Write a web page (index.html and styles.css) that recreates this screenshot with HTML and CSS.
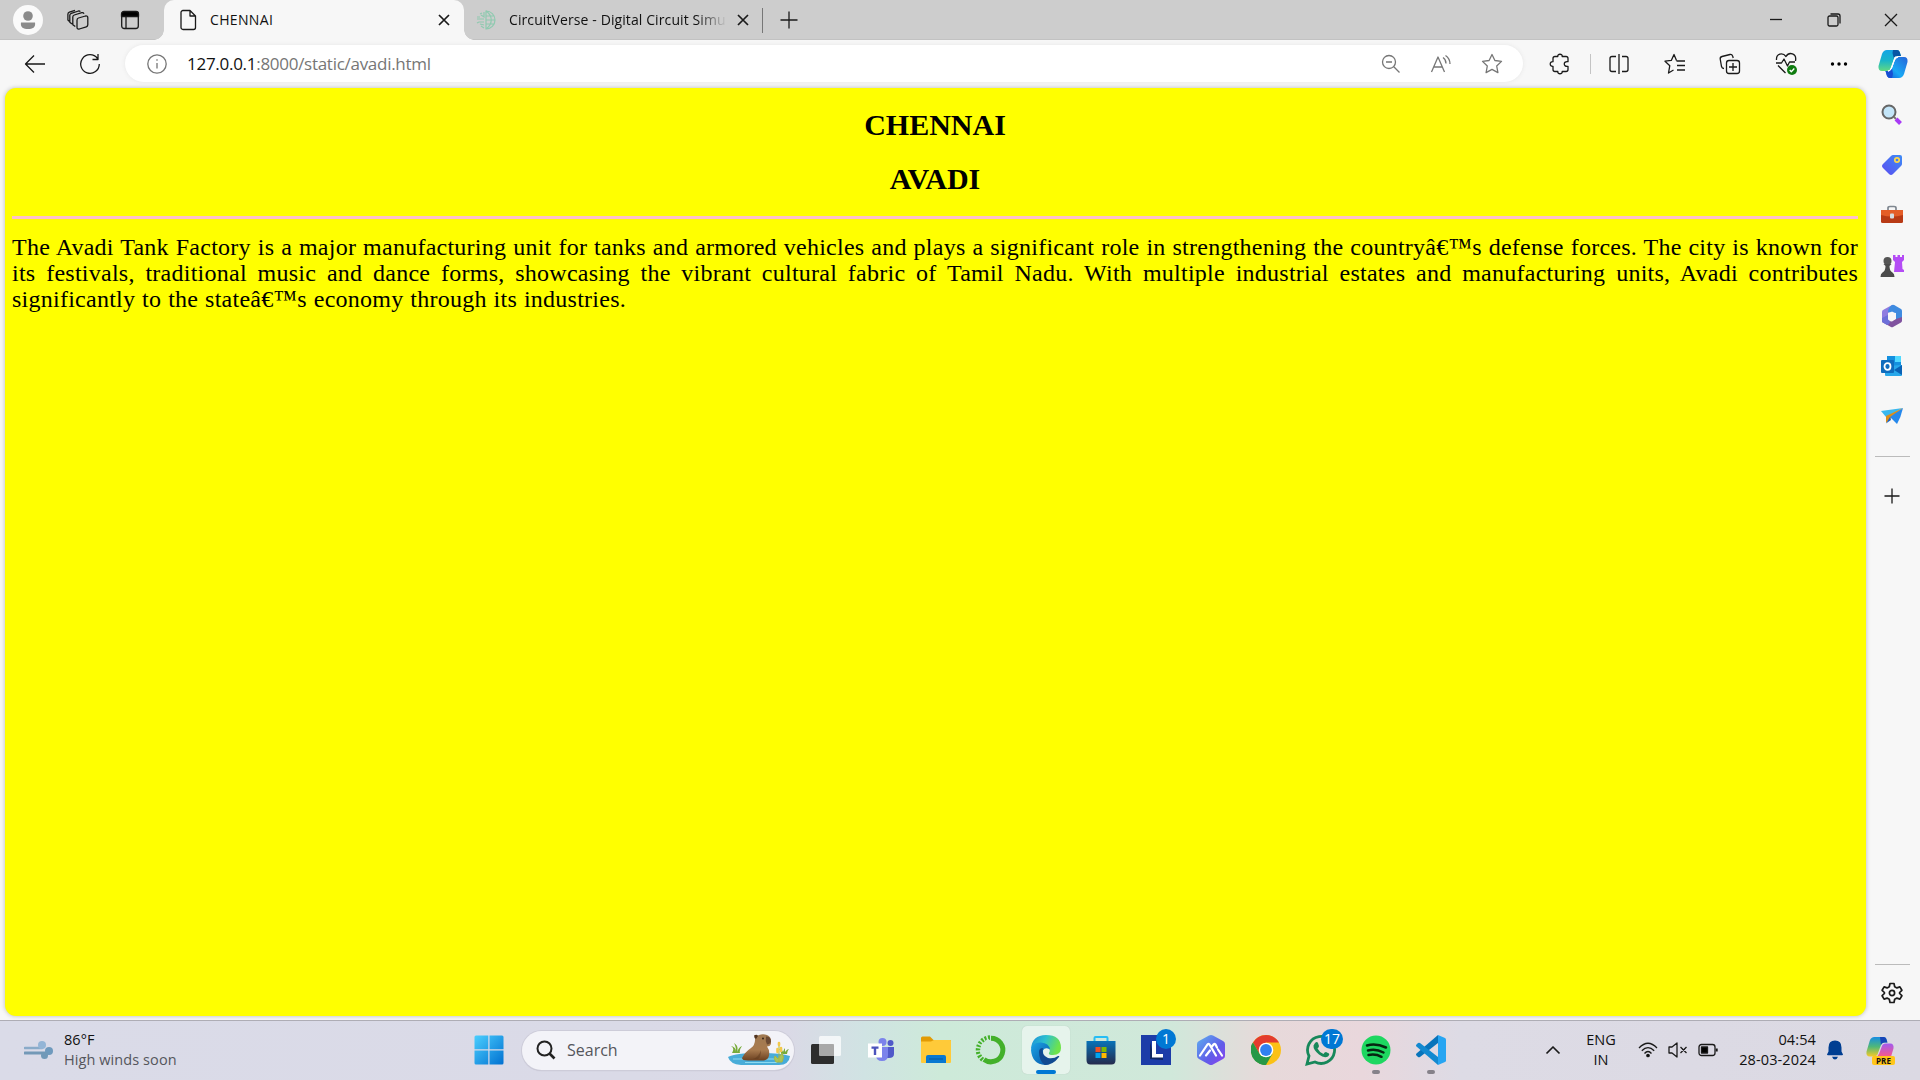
FILE: index.html
```html
<!DOCTYPE html>
<html lang="en">
<head>
<meta charset="utf-8">
<title>CHENNAI</title>
<link rel="stylesheet" href="styles.css">
</head>
<body>
<div class="screen">
  <header class="titlebar">
    <div class="slot s-profile"><svg width="30" height="30" viewBox="0 0 30 30"><circle cx="15" cy="15" r="15" fill="#fafafa"/><circle cx="15" cy="11" r="4.800" fill="#8b8b8b"/><path d="M8 17.500h14c.8 5-2.500 6.500-7 6.500s-7.800-1.500-7-6.500z" fill="#8b8b8b"/></svg></div>
    <div class="slot s-spaces"><svg class="line" width="22" height="22" viewBox="0 0 22 22"><path d="M11.500 9l7-2q2.300-.4 2.300 1.800v7q0 1.500-1.500 2l-7 2.200q-2.300.5-2.300-1.800v-7q0-1.700 1.500-2.200zM8.300 17.500l-2.500-1.800V8q0-1.500 1.500-2l7.500-2.300q1.500-.3 2.200 1M5 15l-2.200-1.700v-7q0-1.500 1.500-2L11.500 2q1.200-.2 1.800.7M2.200 12.200L.9 11V5.200q0-1.500 1.500-2L8 1.300"/></svg></div>
    <div class="slot s-actions"><svg class="line" width="20" height="20" viewBox="0 0 20 20"><rect x="1.700" y="2" width="16.600" height="16.500" rx="2.500"/><path d="M1.500 6.500V4a2.500 2.500 0 0 1 2.500-2.500h12A2.500 2.500 0 0 1 18.500 4v2.500z" fill="#000"/><path d="M6 6v12"/></svg></div>
    <div class="tab tab-active">
      <svg class="line" width="18" height="22" viewBox="0 0 18 22"><path d="M4 1.500h7l5.500 5.500v11.500a2 2 0 0 1-2 2H4a2 2 0 0 1-2-2v-15a2 2 0 0 1 2-2zM11 1.500V7h5.500"/></svg>
      <span class="tab-title">CHENNAI</span>
      <svg class="line bold" width="12" height="12" viewBox="0 0 12 12"><path d="M1 1l10 10M11 1L1 11"/></svg>
    </div>
    <div class="tab tab-idle">
      <svg width="20" height="20" viewBox="0 0 20 20" fill="none" stroke="#8fcab0" stroke-width="1.200"><path d="M10 1a9 9 0 0 1 0 18zM10 1c7 5 7 13 0 18M10 6h8M10 10h9M10 14h8M8 2v5L5 5M8 9H1M8 12H3l-2 1M8 15l-4-1M8 18l-3-2M4 7H1M6 3l-2 1"/></svg>
      <span class="tab-title fade">CircuitVerse - Digital Circuit Simu</span>
      <svg class="line bold" width="12" height="12" viewBox="0 0 12 12"><path d="M1 1l10 10M11 1L1 11"/></svg>
      <i class="tab-rule"></i>
    </div>
    <div class="slot s-new"><svg class="line" width="18" height="18" viewBox="0 0 18 18"><path d="M9 .5v17M.5 9h17"/></svg></div>
    <div class="window-buttons">
      <svg class="line" width="14" height="14" viewBox="0 0 14 14"><path d="M1 6.500h12"/></svg>
      <svg class="line" width="14" height="14" viewBox="0 0 14 14"><rect x="1" y="3" width="10" height="10" rx="1.500"/><path d="M3.500 1h7.500a2 2 0 0 1 2 2v7.500"/></svg>
      <svg class="line" width="14" height="14" viewBox="0 0 14 14"><path d="M1 1l12 12M13 1L1 13"/></svg>
    </div>
  </header>

  <nav class="toolbar">
    <div class="slot s-back"><svg class="line" width="22" height="20" viewBox="0 0 22 20"><path d="M21 10H1.500M10 1.500L1.500 10l8.500 8.500"/></svg></div>
    <div class="slot s-reload"><svg class="line" width="22" height="22" viewBox="0 0 22 22"><path d="M18.500 5.500A9.300 9.300 0 1 0 20.300 11M19 1v5.500h-5.500"/></svg></div>
    <div class="address">
      <svg class="line grey" width="20" height="20" viewBox="0 0 20 20"><circle cx="10" cy="10" r="9.200"/><path d="M10 9v5.500M10 5.300v1.500"/></svg>
      <span class="url"><b>127.0.0.1</b>:8000/static/avadi.html</span>
      <div class="address-tools">
        <svg class="line grey" width="20" height="20" viewBox="0 0 20 20"><circle cx="8" cy="8" r="6.500"/><path d="M5 8h6M12.800 12.800l5.700 5.700"/></svg>
        <svg class="line grey" width="22" height="20" viewBox="0 0 22 20"><path d="M1.500 18L8 3l6.500 15M4 13h8M13 3.500q3 2 3 6M15.500 1.500q4.500 3 4.500 8.500"/></svg>
        <svg class="line grey" width="22" height="22" viewBox="0 0 22 22"><path d="M11 1.500l2.900 6 6.600.9-4.800 4.600 1.200 6.600-5.900-3.200-5.900 3.200L6.300 13 1.500 8.400l6.600-.9z"/></svg>
      </div>
    </div>
    <div class="slot s-ext"><svg class="line" width="22" height="22" viewBox="0 0 22 22"><path d="M6 3.500h2.800c-.5-3 4.900-3 4.400 0H17q2 0 2 2v3.200c-5-1-5 5.600 0 4.600v3.200q0 2-2 2h-3.800c.5 3-4.900 3-4.400 0H6q-2 0-2-2v-3.200c-3.700.3-3.700-4.900 0-4.600V5.500q0-2 2-2z"/></svg></div>
    <i class="tool-rule"></i>
    <div class="tools">
      <svg class="line" width="22" height="22" viewBox="0 0 22 22"><path d="M8 3.500H4q-2 0-2 2v11q0 2 2 2h4M14 3.500h4q2 0 2 2v11q0 2-2 2h-4M11 1v20"/></svg>
      <svg class="line" width="22" height="22" viewBox="0 0 22 22"><path d="M12.500 7.500L10 1.500 7.300 7.400 1 8.200l4.800 4.500L4.500 20l5-3M12.500 8H21M13 12.500h8M13 17h8"/></svg>
      <svg class="line" width="22" height="22" viewBox="0 0 22 22"><rect x="7.500" y="7.500" width="13" height="13" rx="2.500"/><path d="M14 10v8M10 14h8M5 15.500q-2 0-2.500-2L1.200 6Q1 4 3 3.500l8-2q2-.3 2.700 1.700l.5 1.800"/></svg>
      <svg class="line" width="22" height="24" viewBox="0 0 22 24"><path d="M1.500 8C1 1 8 .5 11 4.500 14-.5 22 1 20.500 9M1 11h5.500L9 7l3.500 7 2-4H20M3 13.500l7.500 7.500"/><circle cx="17" cy="18" r="5" fill="#107c10" stroke="none"/><path d="M14.700 18l1.600 1.700 3-3.200" stroke="#fff"/></svg>
      <svg width="18" height="6" viewBox="0 0 18 6"><circle cx="2.500" cy="3" r="1.700"/><circle cx="9" cy="3" r="1.700"/><circle cx="15.500" cy="3" r="1.700"/></svg>
    </div>
    <div class="slot s-copilot"><svg width="30" height="30" viewBox="0 0 30 30"><defs><linearGradient id="ca" x1="0" y1="0" x2="0" y2="1"><stop stop-color="#13a5e5"/><stop offset=".5" stop-color="#19b5c9"/><stop offset="1" stop-color="#61d982"/></linearGradient><linearGradient id="cb" x1="1" y1="0" x2="0" y2="1"><stop stop-color="#2764d8"/><stop offset=".6" stop-color="#19a9f5"/><stop offset="1" stop-color="#1450d2"/></linearGradient></defs><path d="M9 1h10q2 0 2.700 2L23 7h-3q-3 0-4 3l-3 8q-1 4-4 4H4q-4 0-3.500-5L4 5q1.500-4 5-4z" fill="url(#ca)"/><path d="M15 1h4q2 0 2.700 2L23 7h-3q-3 0-4 3L14.500 4z" fill="#0756a4"/><path d="M21 29H12q-2 0-3-2l-1.500-5H10q3 0 4-3l3-8q1-3 4-3h5q4 0 3.500 5L26 25q-1.500 4-5 4z" fill="url(#cb)"/><path d="M7.500 22H10q3 0 4-3l1 6-1 4h-2q-2 0-3-2z" fill="#174fd3"/><path d="M17 8h3q-3 1-4 4l-3 8q-1 2-3 2h1q2-1 3-4z" fill="#fff" stroke="#fff"/></svg></div>
  </nav>

  <div class="workspace">
    <main class="page">
      <h1>CHENNAI</h1>
      <h1>AVADI</h1>
      <hr>
      <p><span class="row r1">The Avadi Tank Factory is a major manufacturing unit for tanks and armored vehicles and plays a significant role in strengthening the countryâ€™s defense forces. The city is known for</span>
      <span class="row r2">its festivals, traditional music and dance forms, showcasing the vibrant cultural fabric of Tamil Nadu. With multiple industrial estates and manufacturing units, Avadi contributes</span>
      <span class="row r3">significantly to the stateâ€™s economy through its industries.</span></p>
    </main>
    <aside class="sidebar">
      <div class="side-slot"><svg width="22" height="22" viewBox="0 0 22 22"><path d="M13 13l2 2" stroke="#777" stroke-width="2"/><path d="M15 15l4.500 4.500" stroke="#a83af5" stroke-width="4"/><circle cx="8" cy="8" r="6.500" fill="#c3e5f8" stroke="#666" stroke-width="2"/></svg></div>
      <div class="side-slot"><svg width="22" height="22" viewBox="0 0 22 22"><defs><linearGradient id="tg" x1="1" y1="0" x2="0" y2="1"><stop stop-color="#3e8cf6"/><stop offset="1" stop-color="#5b4cf0"/></linearGradient></defs><path d="M12 1h7q2 0 2 2v7q0 1-1 2l-8 8q-2 2-4 0l-6-6q-2-2 0-4l8-8q1-1 2-1z" fill="url(#tg)"/><circle cx="16" cy="6" r="2.200" fill="none" stroke="#ffd84a" stroke-width="1.700"/></svg></div>
      <div class="side-slot"><svg width="24" height="20" viewBox="0 0 24 20"><path d="M8 5V3q0-1.500 2-1.500h4q2 0 2 1.500v2" fill="none" stroke="#7f8790" stroke-width="1.700"/><rect x="1" y="5" width="22" height="13" rx="1.500" fill="#b83a15"/><path d="M1 5h22v5q-11 3-22 0z" fill="#e45d27"/><rect x="10" y="8.500" width="4" height="5" rx="1" fill="#d6dce0"/></svg></div>
      <div class="side-slot"><svg width="24" height="24" viewBox="0 0 24 24"><path d="M13 1h2.500v2h2V1h2.500v2h2V1H24v5l-2 2 .5 7 1.500 1v2H14l1-10-2-2z" fill="#b44cf5"/><circle cx="7.500" cy="7" r="4" fill="#555"/><path d="M3.500 10h8l-2 2q0 5 3 6.500 2 1 2 4.500H.5q0-3.500 2-4.500 3-1.500 3-6.500z" fill="#4b4b4b"/></svg></div>
      <div class="side-slot"><svg width="22" height="24" viewBox="0 0 22 24"><path d="M11 1L2 6q-1 .5-1 2v8l6 1V9l7-3V2q-1.500-1.500-3-1z" fill="#8f7ce0"/><path d="M11 1q1.500-.5 3 .5L20 5q1 .5 1 2v10l-6-2V9L7 8q0-4 4-7z" fill="#3f8be0"/><path d="M1 16v2l9 5q1 .5 2 0l8-4.500q1-.5 1-2V13l-6 2-4 2.500z" fill="#80539f"/><path d="M1 14v4l5 3q3-.5 3-4l-2-1.500V11z" fill="#6d6fd8"/><path d="M11 7.500l4 2.300v4.600l-4 2.300-4-2.300V9.800z" fill="#f7f7f7"/></svg></div>
      <div class="side-slot"><svg width="22" height="22" viewBox="0 0 22 22"><path d="M6 1h14v11H6z" fill="#1490df"/><path d="M14 1h6v6h-6z" fill="#50d9ff"/><path d="M4 11l17-1v10q0 1-1 1H5q-1 0-1-1z" fill="#28a8ea"/><path d="M21 10v10l-8-5z" fill="#0a62b5"/><rect y="5" width="13" height="13" rx="1" fill="#0f6cbd"/><ellipse cx="6.500" cy="11.500" rx="3" ry="3.300" fill="none" stroke="#fff" stroke-width="1.800"/></svg></div>
      <div class="side-slot"><svg width="22" height="18" viewBox="0 0 22 18"><path d="M0 4L22 1 5 10z" fill="#39b8ef"/><path d="M22 1L5 9v7l4-4z" fill="#dc8d19"/><path d="M22 1L9 10l7 7q4-7 6-16z" fill="#2588ec"/><path d="M9 10l-4 6.500 5-3.500z" fill="#1861c4"/></svg></div>
      <i class="side-rule"></i>
      <div class="side-add"><svg class="line" width="16" height="16" viewBox="0 0 16 16"><path d="M8 .5v15M.5 8h15"/></svg></div>
      <div class="side-bottom">
        <i class="side-rule"></i>
        <svg class="line bold" width="22" height="22" viewBox="0 0 22 22"><path d="M9 1.500h4l.7 3.200 2.200 1.200 3-1 2 3.400-2.300 2.200v1l2.300 2.200-2 3.400-3-1-2.200 1.200-.7 3.200H9l-.7-3.200-2.200-1.200-3 1-2-3.400 2.300-2.200v-1L1.100 8.300l2-3.400 3 1 2.200-1.200z"/><circle cx="11" cy="11" r="2.600"/></svg>
      </div>
    </aside>
  </div>

  <footer class="taskbar">
    <div class="weather">
      <svg width="30" height="20" viewBox="0 0 30 20" fill="none" stroke-linecap="round"><path d="M1 8h17" stroke="#8aabc9" stroke-width="2.600"/><circle cx="18" cy="5" r="4" fill="#93b5d6"/><path d="M1 13h23" stroke="#7399b7" stroke-width="3"/><circle cx="25" cy="11" r="4" fill="#6f9abd"/><circle cx="20.500" cy="15.500" r="3.500" fill="#7199b8"/></svg>
      <div class="weather-text"><span>86°F</span><span class="dim">High winds soon</span></div>
    </div>
    <div class="apps">
      <div class="app"><svg width="30" height="30" viewBox="0 0 30 30"><defs><linearGradient id="w" gradientUnits="userSpaceOnUse" x1="0" y1="0" x2="30" y2="30"><stop stop-color="#4bd0ff"/><stop offset="1" stop-color="#006fd0"/></linearGradient></defs><path d="M2 .5h12.300v13.800H.5V2Q.5.500 2 .5zM15.500.5H28q1.500 0 1.500 1.500v12.300h-14zM.5 15.500h13.800v14H2Q.5 29.500.5 28zM15.500 15.500h14V28q0 1.500-1.500 1.500H15.500z" fill="url(#w)"/></svg></div>
      <div class="search">
        <svg width="20" height="20" viewBox="0 0 20 20" fill="none" stroke="#222" stroke-width="2"><circle cx="8.500" cy="8.500" r="7"/><path d="M13.500 13.500l5 5" stroke-width="2.600"/></svg>
        <span>Search</span>
        <svg class="capybara" width="64" height="32" viewBox="0 0 64 32"><defs><linearGradient id="fur" x2="0" y2="1"><stop stop-color="#a07a52"/><stop offset=".6" stop-color="#a87a4e"/><stop offset="1" stop-color="#6b4020"/></linearGradient></defs><path d="M1 23q8-4 30-4t32 3q-1 9-11 9H14Q3 30 1 23z" fill="#48acd8"/><path d="M6 25h48M18 28.500h32" stroke="#8cdaf0"/><path d="M5 19Q8 14 4 12q5 1 5 6 0-6-2-9 5 3 3 9 2-5 5-6-3 4-2 7zM54 20q0-4-2-5 3 0 4 3 1-3 2-4v4q2-3 4-3-2 2-2 5z" fill="#77aa39"/><path d="M15 24q3-6 9-10 4-3 4-8 0-4 4-5 4-1.500 8 0 4 1.500 4 6v3q-1 2.500-4 2.500 3 4 2 9-.5 4-5 5H21q-6 0-6-2.500z" fill="url(#fur)"/><path d="M39 2.500q5 0 5 5-1 3-4 3-2-4-1-8z" fill="#6b4a33"/><path d="M27 1.500q3-1.500 4 .5l-2 3q-2-1-2-3.500z" fill="#51341f"/><circle cx="36" cy="4.500" r=".9" fill="#2c1d13"/><path d="M26 25q6-2 8-9 0 7-3 9z" fill="#5e3a1e" opacity=".5"/><path d="M52 28V12m-3 16q-3-4-1-6l3 3 4-6q3 4 0 9z" stroke="#a5b945" fill="#a8c45c"/><path d="M52 9v2M54 14v3M50.500 15v3" stroke="#f2c84b" stroke-width="2.600" stroke-linecap="round"/></svg>
      </div>
      <div class="app"><svg width="32" height="30" viewBox="0 0 32 30"><rect x="1" y="9" width="23" height="20" rx="1.500" fill="#2d2d2d"/><rect x="9" y="1" width="22" height="20" rx="1.500" fill="#fff" opacity=".72"/><path d="M24 9V21H9V9z" fill="#888" opacity=".45"/></svg></div>
      <div class="app"><svg width="28" height="26" viewBox="0 0 28 26"><circle cx="15.500" cy="5" r="4" fill="#7b83eb"/><circle cx="23.500" cy="6" r="3" fill="#5059c9"/><path d="M19 10h8v7q0 4-5 4h-3z" fill="#5059c9"/><path d="M9 10h12v8q0 6-6 6t-6-6z" fill="#7b83eb"/><rect x="1" y="6.500" width="14" height="14" fill="#fff"/><path d="M4.500 9.500h7v2.200H9.200V18H6.800v-6.300H4.500z" fill="#4b53bc"/></svg></div>
      <div class="app"><svg width="32" height="28" viewBox="0 0 32 28"><path d="M1 8V2q0-1.500 1.500-1.500H10l3.500 3.500H30q1 0 1 1v5z" fill="#e29b05"/><path d="M1 5.500h10l3-1.500h16q1 0 1 1v21q0 1-1 1H2q-1 0-1-1z" fill="#ffca39"/><path d="M6 27v-6q0-2 2-2h16q2 0 2 2v6z" fill="#0878d1"/><path d="M9 23h14" stroke="#07599d"/></svg></div>
      <div class="app"><svg width="32" height="32" viewBox="0 0 32 32" fill="none" stroke="#43b02a"><path d="M16 4.200a11.800 11.800 0 1 1-7 21.300" stroke-width="5"/><path d="M15 3.500A12.500 12.500 0 0 0 8 26" stroke-width="4.500" stroke-dasharray="2 1.500"/><path d="M14 6A10 10 0 0 0 8 22" stroke="#cfead9" stroke-dasharray="3 4" stroke-width="2"/></svg></div>
      <div class="app app-current"><svg width="30" height="30" viewBox="0 0 30 30"><defs><linearGradient id="ea" x2="1" y2=".3"><stop stop-color="#1b8cd9"/><stop offset=".5" stop-color="#2dc1cf"/><stop offset="1" stop-color="#6ee34b"/></linearGradient><linearGradient id="eb" x2="1" y2="1"><stop stop-color="#1ca4e5"/><stop offset="1" stop-color="#0652a6"/></linearGradient></defs><path d="M0 14Q1 0 15 0q15 0 15 13 0 7-8 7-5 0-4-2 2-3-1-6Q10 6 0 14z" fill="url(#ea)"/><path d="M0 15Q1 7 10 7.500q8 .5 9 7-5-3-7 1-1 9 9 11-3 3.500-7 3.500Q1 29 0 15z" fill="url(#eb)"/><path d="M8 17q0-4 4-4-2 7 5 10 6 1 10-2 2-.5 1 1-6 8-14 8-6-4-6-13z" fill="#114a91"/></svg><i class="run-mark"></i></div>
      <div class="app"><svg width="30" height="30" viewBox="0 0 30 30"><defs><linearGradient id="st" x2="0" y2="1"><stop stop-color="#0873b8"/><stop offset="1" stop-color="#252a4c"/></linearGradient></defs><path d="M8.500 7V3q0-1 1-1h11q1 0 1 1v4" fill="none" stroke="#27bdf4" stroke-width="2"/><path d="M.5 6h29v19q0 4.500-4 4.500h-21q-4 0-4-4.500z" fill="url(#st)"/><path fill="#f25022" d="M9.500 12h5v5h-5z"/><path fill="#7fba00" d="M15.500 12h5v5h-5z"/><path fill="#00a4ef" d="M9.500 18h5v5h-5z"/><path fill="#ffb900" d="M15.500 18h5v5h-5z"/></svg></div>
      <div class="app"><svg width="30" height="30" viewBox="0 0 30 30"><path d="M0 0h30v30H0z" fill="#1c3ca8"/><path d="M9 7l4 15h9v3L9 24z" fill="#102762"/><path d="M11 6h4v13h7v3.500H11z" fill="#fff"/></svg><span class="badge">1</span></div>
      <div class="app"><svg width="30" height="32" viewBox="0 0 30 32"><defs><linearGradient id="al" x2="1" y2="1"><stop stop-color="#5eb0ef"/><stop offset=".6" stop-color="#605ce9"/><stop offset="1" stop-color="#8f42ef"/></linearGradient></defs><path d="M13 1.500q2-1 4 0l10 5.500q2 1 2 3v12q0 2-2 3l-10 5.500q-2 1-4 0L3 25q-2-1-2-3V10q0-2 2-3z" fill="url(#al)"/><path d="M4 21.500l7.500-11q1-1 2 0l6.500 11M10 21.500l4-5M15.500 13l2-2.500q1-1 2 0l1.500 3M22 15.500l4 6" fill="none" stroke="#fff" stroke-width="2.200" stroke-linecap="round"/></svg></div>
      <div class="app"><svg width="30" height="30" viewBox="0 0 30 30"><circle cx="15" cy="15" r="15" fill="#fbc116"/><path d="M2 7.500Q6.500 0 15 0t13 7.500H15L8.500 18.800z" fill="#e33b2e"/><path d="M2 7.500l6.500 11.300q3 4.500 8 3.700L14 30Q-2 28 0 11q.5-2 2-3.500z" fill="#279847"/><path d="M21.500 18.700L15 30Q8 30 4 25l6-4z" fill="#279847"/><circle cx="15" cy="15" r="7.300" fill="#fff"/><circle cx="15" cy="15" r="5.900" fill="#3180f0"/></svg></div>
      <div class="app"><svg width="32" height="32" viewBox="0 0 32 32"><path d="M2 30l2-8A13.500 13.500 0 1 1 10 28z" fill="none" stroke="#17885a" stroke-width="2.800"/><path d="M10 9q2-2 3 0l1 3q0 1-1.500 2.500 2 4 6 5.500 1-2 2.500-2l3 1.500q1 1-1 3-4 2-9-2-6-5-5.500-9z" fill="#17885a"/></svg><span class="badge">17</span></div>
      <div class="app"><svg width="30" height="30" viewBox="0 0 30 30"><circle cx="15" cy="15" r="14.500" fill="#1ed760"/><path d="M6 10.500q9-2.500 19 2M7 15.500q8-2 15.500 2M7.500 20q7-1.500 13 1.800" fill="none" stroke="#062611" stroke-width="2.500" stroke-linecap="round"/></svg><i class="run-mark idle"></i></div>
      <div class="app"><svg width="30" height="30" viewBox="0 0 30 30"><path d="M22 0l7 3q1 .5 1 1.500v21q0 1-1 1.500l-7 3z" fill="#27a5f2"/><path d="M22 0v8L4 22q-1 .5-2 0L.5 20.500q-1-1 0-2z" fill="#0874bb"/><path d="M22 30v-8L4 8Q3 7.500 2 8L.5 9.500q-1 1 0 2z" fill="#1389d0"/></svg><i class="run-mark idle"></i></div>
    </div>
    <div class="tray">
      <svg class="line bold t-chevron" width="16" height="10" viewBox="0 0 16 10"><path d="M1.500 8.500L8 2l6.500 6.500"/></svg>
      <div class="lang"><span>ENG</span><span>IN</span></div>
      <svg class="line t-wifi" width="20" height="16" viewBox="0 0 20 16"><path d="M1 6q9-9.500 18 0M3.800 8.800q6.200-6.500 12.400 0M6.500 11.500q3.500-4 7 0"/><circle cx="10" cy="13.500" r="1.200" fill="#000"/></svg>
      <svg class="line t-mute" width="20" height="16" viewBox="0 0 20 16"><path d="M1 5h3l5-4v14l-5-4H1zM12.500 5l6 6M18.500 5l-6 6"/></svg>
      <svg class="line t-battery" width="20" height="14" viewBox="0 0 20 14"><rect x="1" y="1.500" width="16" height="11" rx="2.500"/><rect x="3.500" y="4" width="6" height="6" fill="#000"/><path d="M18.700 5.500v3" stroke-width="2"/></svg>
      <div class="clock"><span>04:54</span><span>28-03-2024</span></div>
      <svg class="t-bell" width="18" height="20" viewBox="0 0 18 20"><path d="M9 .5q6.500 0 6.500 7v4l1.500 3q0 .8-1 .8H2q-1 0-1-.8l1.500-3v-4q0-7 6.500-7zM6 16.800h6q-1 2.700-3 2.700t-3-2.700z" fill="#003e92"/></svg>
      <div class="pre"><svg width="28" height="28" viewBox="0 0 30 30"><defs><linearGradient id="pa" x2="0" y2="1"><stop stop-color="#168de3"/><stop offset=".5" stop-color="#50b878"/><stop offset="1" stop-color="#f5cb28"/></linearGradient><linearGradient id="pb" x2="0" y2="1"><stop stop-color="#a25bf0"/><stop offset=".6" stop-color="#ef5a94"/><stop offset="1" stop-color="#f89a4a"/></linearGradient></defs><path d="M9 1h10q2 0 2.700 2L23 7h-3q-3 0-4 3l-3 8q-1 4-4 4H4q-4 0-3.500-5L4 5q1.500-4 5-4z" fill="url(#pa)"/><path d="M15 1h4q2 0 2.700 2L23 7h-3q-3 0-4 3z" fill="#1746b8"/><path d="M21 29H12q-2 0-3-2l-1.500-5H10q3 0 4-3l3-8q1-3 4-3h5q4 0 3.500 5L26 25q-1.500 4-5 4z" fill="url(#pb)"/></svg><span>PRE</span></div>
    </div>
  </footer>
</div>
</body>
</html>
```
FILE: styles.css
```css
* { box-sizing: border-box; }
body { margin: 0; font-family: "Open Sans", "Noto Sans", sans-serif; color: #111; }
.screen { width: 1920px; height: 1080px; display: grid; grid-template-rows: 40px 48px 932px 60px; overflow: hidden; background: #f7f7f7; }
svg { display: block; flex: none; }
.line { fill: none; stroke: #1a1a1a; stroke-width: 1.3; stroke-linejoin: round; }
.bold { stroke-width: 1.7; }
.grey { stroke: #767676; }
.slot { display: flex; align-items: center; justify-content: center; flex: none; }

.titlebar { display: flex; background: #cdcdcd; box-shadow: inset 0 -1px #c2c2c2; }
.s-profile { width: 56px; }
.s-spaces { width: 44px; }
.s-actions { width: 60px; margin-right: 4px; }
.tab { display: flex; align-items: center; flex: none; font-size: 14px; }
.tab-title { padding-bottom: 2px; letter-spacing: .1px; white-space: nowrap; overflow: hidden; }
.tab-active { position: relative; width: 300px; padding: 0 14px 0 15px; background: #f7f7f7; border-radius: 10px 10px 0 0; }
.tab-active::before, .tab-active::after { content: ""; position: absolute; bottom: 0; width: 10px; height: 10px; }
.tab-active::before { left: -10px; background: radial-gradient(circle at 0 0, transparent 9.5px, #f7f7f7 10px); }
.tab-active::after { right: -10px; background: radial-gradient(circle at 100% 0, transparent 9.5px, #f7f7f7 10px); }
.tab-active .tab-title { flex: 1; margin-left: 13px; letter-spacing: .35px; }
.tab-idle { width: 299px; padding-left: 12px; }
.tab-idle .tab-title { width: 218px; margin: 0 10px 0 13px; }
.fade { -webkit-mask-image: linear-gradient(90deg, #000 86%, transparent); mask-image: linear-gradient(90deg, #000 86%, transparent); }
.tab-rule { width: 1px; height: 25px; margin-left: 13px; background: #777; }
.s-new { width: 52px; }
.window-buttons { display: flex; align-items: center; gap: 43.500px; margin-left: auto; padding-right: 22px; }

.toolbar { display: flex; align-items: center; padding-bottom: 1px; }
.s-back { width: 70px; }
.s-reload { width: 40px; margin-right: 15px; }
.address { display: flex; align-items: center; width: 1398px; height: 37px; padding: 0 20px 0 22px; border-radius: 19px; background: #fff; box-shadow: 0 0 4px #e6e6e6; }
.url { margin-left: 20px; padding-bottom: 1px; font-size: 17px; letter-spacing: -.28px; color: #767676; white-space: nowrap; }
.url b { font-weight: 400; color: #111; }
.address-tools { display: flex; align-items: center; gap: 29px; margin-left: auto; }
.s-ext { width: 74px; }
.tool-rule { width: 1px; height: 20px; margin-left: -7px; background: #c4c4c4; }
.tools { display: flex; align-items: center; gap: 33.500px; padding-left: 17px; }
.s-copilot { width: 54px; margin-left: auto; }

.workspace { display: grid; grid-template-columns: 1861px 52px; padding: 0 0 4px 5px; }
.page { overflow: hidden; padding: 20px 8px 0 7px; border-radius: 11px; background: #ff0; box-shadow: 0 0 4px #b8b8b8; font-family: Georgia, "Liberation Serif", serif; color: #000; }
.page h1 { margin: 0 0 20px; font: bold 30px/34px "Liberation Serif", serif; text-align: center; }
.page hr { height: 3px; margin: 0; border: 0; background: pink; }
.page p { margin: 15px 0 0; font-size: 24px; line-height: 26px; letter-spacing: .25px; }
.row { display: block; white-space: nowrap; text-align: justify; text-align-last: justify; }
.r3 { width: 614px; }

.sidebar { display: flex; flex-direction: column; align-items: center; padding-top: 2px; }
.side-slot { display: flex; align-items: center; justify-content: center; width: 52px; height: 50.200px; }
.side-rule { width: 35px; height: 1px; background: #bbb; }
.side-slot + .side-rule { margin-top: 15px; }
.side-add { margin-top: 31px; }
.side-bottom { display: flex; flex-direction: column; align-items: center; gap: 17px; margin-top: auto; padding-bottom: 12px; }

.taskbar { display: grid; grid-template-columns: 461px 1000px 459px; border-top: 1px solid #aeadb5; background: linear-gradient(90deg, #dadbe8 0, #dadae7 33%, #dad9e6 41%, #d0e3e3 45%, #cdead9 49%, #d0e8da 61%, #e7d9da 66%, #e9d7dc 71%, #dddbe5 76%, #dbd9e3 100%); font-size: 14.500px; }
.weather { display: flex; align-items: center; gap: 10px; padding: 0 0 2px 24px; }
.weather-text, .lang, .clock { display: flex; flex-direction: column; line-height: 20px; }
.weather-text { letter-spacing: .08px; }
.dim { color: #55565c; }
.apps { display: flex; align-items: center; padding-bottom: 1px; }
.app { position: relative; display: flex; align-items: center; justify-content: center; flex: none; width: 55px; height: 58px; }
.search { display: flex; align-items: center; width: 272px; height: 39px; margin: 0 4px 0 6px; padding: 0 3px 0 14px; border-radius: 20px; background: #f3f3f8; box-shadow: 0 0 0 1px #cdccd9, 0 1px 1px #b6b5c4; font-size: 16px; color: #55565c; }
.search span { flex: 1; margin-left: 11px; }
.app-current { isolation: isolate; }
.app-current::before { content: ""; position: absolute; z-index: -1; inset: 5px 3.500px; border-radius: 5px; background: #e6f4ec; box-shadow: 0 0 1px #aebfb6; }
.run-mark { position: absolute; left: 50%; bottom: 5px; width: 20px; height: 4px; margin-left: -10px; border-radius: 2px; background: #0078d4; }
.run-mark.idle { width: 8px; margin-left: -4px; background: #858189; }
.badge { position: absolute; top: 8px; left: 28px; min-width: 20px; height: 20px; padding: 0 3px; border-radius: 10px; background: #0078d4; color: #fff; font-size: 14px; line-height: 19px; text-align: center; }
.tray { display: flex; align-items: center; padding: 0 0 2px 84px; }
.t-chevron { margin-right: 26px; }
.lang { width: 28px; align-items: center; margin-right: 23px; }
.t-wifi { margin-right: 10px; }
.t-mute { margin-right: 10px; }
.clock { width: 98px; align-items: flex-end; letter-spacing: .12px; }
.t-bell { margin-left: 10px; }
.pre { position: relative; margin-left: 22px; }
.pre span { position: absolute; left: 6px; bottom: -1px; width: 23px; height: 9px; border-radius: 2px; background: #ffc61a; font-size: 8px; font-weight: 700; line-height: 9px; text-align: center; }
```
